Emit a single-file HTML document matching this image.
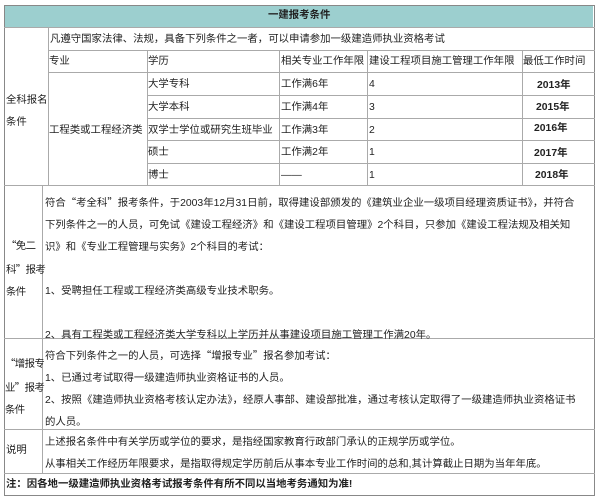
<!DOCTYPE html><html><head><meta charset="utf-8"><style>
body{margin:0;width:600px;height:500px;background:#fff;font-family:"Liberation Sans","Noto Sans CJK SC",sans-serif;font-size:10.4px;color:#222;position:relative;overflow:hidden}
.l{position:absolute;background:#aaa}
.t{position:absolute;white-space:nowrap;line-height:14px}
.b{font-weight:bold}
.q{font-family:"Noto Sans CJK SC",sans-serif}
.lab{letter-spacing:-0.6px}
</style></head><body>
<div style="position:absolute;left:4px;top:5px;width:589px;height:22px;background:#9ccfcf"></div>
<div style="position:absolute;left:4px;top:5px;width:589px;height:489px;border:1px solid #888"></div>
<div class="l" style="left:4px;top:27px;width:591px;height:1px"></div>
<div class="l" style="left:48px;top:50px;width:547px;height:1px"></div>
<div class="l" style="left:48px;top:72px;width:547px;height:1px"></div>
<div class="l" style="left:147px;top:95px;width:448px;height:1px"></div>
<div class="l" style="left:147px;top:118px;width:448px;height:1px"></div>
<div class="l" style="left:147px;top:140px;width:448px;height:1px"></div>
<div class="l" style="left:147px;top:163px;width:448px;height:1px"></div>
<div class="l" style="left:4px;top:185px;width:591px;height:1px"></div>
<div class="l" style="left:4px;top:338px;width:591px;height:1px"></div>
<div class="l" style="left:4px;top:429px;width:591px;height:1px"></div>
<div class="l" style="left:4px;top:473px;width:591px;height:1px"></div>
<div class="l" style="left:48px;top:27px;width:1px;height:158px"></div>
<div class="l" style="left:147px;top:50px;width:1px;height:135px"></div>
<div class="l" style="left:279px;top:50px;width:1px;height:135px"></div>
<div class="l" style="left:367px;top:50px;width:1px;height:135px"></div>
<div class="l" style="left:522px;top:50px;width:1px;height:135px"></div>
<div class="l" style="left:42px;top:185px;width:1px;height:288px"></div>
<div class="t b" style="left:268px;top:9px">一建报考条件</div>
<div class="t" style="left:50px;top:33px">凡遵守国家法律、法规，具备下列条件之一者，可以申请参加一级建造师执业资格考试</div>
<div class="t" style="left:49px;top:55px">专业</div>
<div class="t" style="left:148px;top:55px">学历</div>
<div class="t" style="left:281px;top:55px">相关专业工作年限</div>
<div class="t" style="left:369px;top:55px">建设工程项目施工管理工作年限</div>
<div class="t" style="left:523px;top:55px">最低工作时间</div>
<div class="t" style="left:6px;top:90px;line-height:22px">全科报名<br>条件</div>
<div class="t" style="left:49px;top:124px">工程类或工程经济类</div>
<div class="t" style="left:148px;top:78px">大学专科</div>
<div class="t" style="left:148px;top:101px">大学本科</div>
<div class="t" style="left:148px;top:124px">双学士学位或研究生班毕业</div>
<div class="t" style="left:148px;top:146px">硕士</div>
<div class="t" style="left:148px;top:169px">博士</div>
<div class="t" style="left:281px;top:78px">工作满6年</div>
<div class="t" style="left:281px;top:101px">工作满4年</div>
<div class="t" style="left:281px;top:124px">工作满3年</div>
<div class="t" style="left:281px;top:146px">工作满2年</div>
<div class="t" style="left:281px;top:169px">——</div>
<div class="t" style="left:369px;top:78px">4</div>
<div class="t" style="left:369px;top:101px">3</div>
<div class="t" style="left:369px;top:124px">2</div>
<div class="t" style="left:369px;top:146px">1</div>
<div class="t" style="left:369px;top:169px">1</div>
<div class="t b" style="left:537px;top:79px">2013年</div>
<div class="t b" style="left:536px;top:101px">2015年</div>
<div class="t b" style="left:534px;top:122px">2016年</div>
<div class="t b" style="left:534px;top:147px">2017年</div>
<div class="t b" style="left:535px;top:169px">2018年</div>
<div class="t lab" style="left:6px;top:234px;line-height:22px"><span class="q">“</span>免二<br>科<span class="q">”</span>报考<br>条件</div>
<div class="t" style="left:45px;top:191px;line-height:22px">符合<span class="q">“</span>考全科<span class="q">”</span>报考条件，于2003年12月31日前，取得建设部颁发的《建筑业企业一级项目经理资质证书》，并符合<br>下列条件之一的人员，可免试《建设工程经济》和《建设工程项目管理》2个科目，只参加《建设工程法规及相关知<br>识》和《专业工程管理与实务》2个科目的考试：<br><br>1、受聘担任工程或工程经济类高级专业技术职务。<br><br>2、具有工程类或工程经济类大学专科以上学历并从事建设项目施工管理工作满20年。</div>
<div class="t lab" style="left:5px;top:352px;line-height:22px"><span class="q">“</span>增报专<br>业<span class="q">”</span>报考<br>条件</div>
<div class="t" style="left:45px;top:344px;line-height:22px">符合下列条件之一的人员，可选择<span class="q">“</span>增报专业<span class="q">”</span>报名参加考试：<br>1、已通过考试取得一级建造师执业资格证书的人员。<br>2、按照《建造师执业资格考核认定办法》，经原人事部、建设部批准，通过考核认定取得了一级建造师执业资格证书<br>的人员。</div>
<div class="t" style="left:6px;top:444px">说明</div>
<div class="t" style="left:45px;top:432px;line-height:22px">上述报名条件中有关学历或学位的要求，是指经国家教育行政部门承认的正规学历或学位。<br>从事相关工作经历年限要求，是指取得规定学历前后从事本专业工作时间的总和,其计算截止日期为当年年底。</div>
<div class="t b" style="left:6px;top:478px">注：因各地一级建造师执业资格考试报考条件有所不同以当地考务通知为准!</div>
</body></html>
